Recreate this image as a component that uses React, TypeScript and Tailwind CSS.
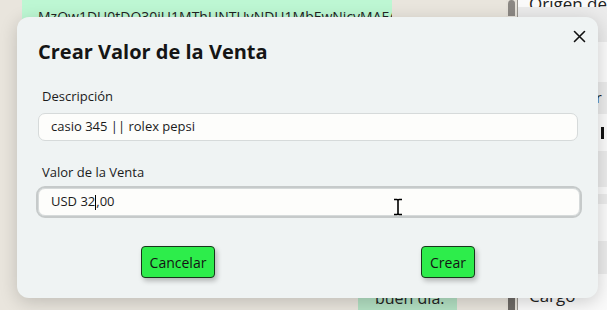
import React from "react";

function CloseIcon() {
  return (
    <svg width="13" height="13" viewBox="0 0 13 13" fill="none" stroke="#111" strokeWidth="1.6" strokeLinecap="round">
      <path d="M1.5 1.5 L11.5 11.5 M11.5 1.5 L1.5 11.5" />
    </svg>
  );
}

function IBeam() {
  return (
    <svg width="12" height="18" viewBox="0 0 12 18" fill="none">
      <path d="M2 1.5 H5 Q6 1.5 6 3 V15 Q6 16.5 5 16.5 H2 M10 1.5 H7 Q6 1.5 6 3 M10 16.5 H7 Q6 16.5 6 15" stroke="#000" strokeWidth="1.6" />
    </svg>
  );
}

export default function App() {
  const font = { fontFamily: '"Open Sans", "Noto Sans", sans-serif' };
  return (
    <div className="relative w-[607px] h-[310px] overflow-hidden bg-[#e9e5dd] flex" style={font}>
      {/* chat area */}
      <div className="w-[519px] h-full flex flex-col justify-between">
        <div className="ml-[22px] w-[370px] h-[60px] -mt-[20px] rounded-b-[10px] bg-[#bdf7d3] pt-[28px] pl-[16px] pr-[10px] text-[14px] text-[#222] leading-[18px] whitespace-nowrap overflow-hidden">
          MzQw1DU0tDQ30iU1MThUNTUyNDU1MbEwNjcyMAFA
        </div>
        <div className="ml-[358px] w-[99px] h-[24px] bg-[#b3e0c3] pl-[17px] pt-[2px] text-[16px] leading-[20px] text-[#222]">
          buen día.
        </div>
      </div>
      {/* scrollbar */}
      <div className="w-[12px] h-full bg-[#e6e2da] flex flex-col justify-between items-center border-r border-[#9a9690]">
        <div className="w-[7px] h-[16px] bg-[#8c8884] rounded-t-[4px]" />
        <div className="w-[7px] h-[22px] bg-[#6e6a66]" />
      </div>
      {/* right panel */}
      <div className="flex-1 h-full bg-[#fafafa] flex flex-col text-[17px] text-[#222] leading-[20px]">
        <div className="h-[13px] pl-[11px] -mt-[6px] whitespace-nowrap">Origen de</div>
        <div className="h-[35px] bg-[#ebebeb] flex items-end pb-[4px] pl-[11px] text-[14px] whitespace-nowrap">Origen or</div>
        <div className="h-[40px] flex items-center pl-[11px] text-[14px] pt-[8px] whitespace-nowrap">Nombre e</div>
        <div className="h-[32px] bg-[#ebebeb] flex items-center pl-[11px] text-[14px] whitespace-nowrap">Fecha de /r</div>
        <div className="h-[37px] flex items-center pl-[11px] text-[14px] whitespace-nowrap">Estado <span className="ml-[28px] inline-block w-[3px] h-[12px] bg-[#111]" /></div>
        <div className="h-[36px] bg-[#ebebeb] flex items-center pl-[11px] text-[14px] whitespace-nowrap">Detalles <span className="ml-[3px] inline-block w-[5px] h-[5px] rounded-full bg-[#f5a04a]" /></div>
        <div className="h-[7px]" />
        <div className="h-[10px] bg-[#ebebeb]" />
        <div className="h-[37px] flex items-center pl-[11px] text-[14px] whitespace-nowrap">Moneda a</div>
        <div className="h-[33px] bg-[#ebebeb] flex items-center pl-[11px] text-[14px] text-[#888] whitespace-nowrap">Ingrese e</div>
        <div className="flex-1 pl-[11px] pt-[12px] whitespace-nowrap">Cargo</div>
      </div>

      {/* modal */}
      <div className="absolute left-[17px] top-[17px] w-[581px] h-[281px] rounded-[12px] bg-[#eff3f3] shadow-[0_4px_18px_rgba(0,0,0,0.18)] flex flex-col pl-[21px] pr-[20px] pt-[21px]">
        <button className="absolute left-[556px] top-[13px] w-[13px] h-[13px] flex items-center justify-center">
          <CloseIcon />
        </button>
        <h2 className="text-[20px] leading-[28px] font-bold text-[#151515]">Crear Valor de la Venta</h2>
        <label className="mt-[21px] ml-[4px] text-[13px] leading-[18px] text-[#1b1b1b]">Descripción</label>
        <div className="mt-[8px] h-[28px] rounded-[7px] border border-[#d6dada] bg-[#fdfdfb] flex items-center pl-[12px] text-[13px] text-[#1b1b1b]">
          casio 345 || rolex pepsi
        </div>
        <label className="mt-[22px] ml-[4px] text-[13px] leading-[18px] text-[#1b1b1b]">Valor de la Venta</label>
        <div className="relative mt-[7px] h-[28px] rounded-[7px] border border-[#d6dada] bg-[#fdfdfb] flex items-center pl-[12px] text-[13px] text-[#1b1b1b] outline outline-2 outline-offset-0 outline-[#c6caca] w-[542px]">
          <span>USD 32</span>
          <span className="inline-block w-px h-[15px] bg-black" />
          <span>,00</span>
          <span className="absolute left-[353px] top-[9px]">
            <IBeam />
          </span>
        </div>
        <div className="mt-[30px] ml-[5px] mr-[-5px] grid grid-cols-2">
          <div className="flex justify-center">
            <button className="h-[32px] w-[74px] rounded-[4px] border border-[#17361b] bg-[#2ded4b] text-[14px] text-[#141414] shadow-[2px_3px_5px_rgba(0,0,0,0.25)]">
              Cancelar
            </button>
          </div>
          <div className="flex justify-center">
            <button className="h-[32px] w-[54px] rounded-[4px] border border-[#17361b] bg-[#2ded4b] text-[14px] text-[#141414] shadow-[2px_3px_5px_rgba(0,0,0,0.25)]">
              Crear
            </button>
          </div>
        </div>
      </div>
    </div>
  );
}
